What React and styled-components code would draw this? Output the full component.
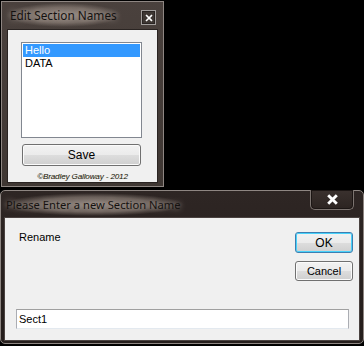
import React from "react";
import styled, { createGlobalStyle } from "styled-components";

const Global = createGlobalStyle`
  html, body { margin: 0; padding: 0; background: #000; }
  body { width: 364px; height: 346px; overflow: hidden; }
`;

const Page = styled.div`
  display: flex;
  flex-direction: column;
  align-items: flex-start;
  padding-top: 1px;
  gap: 3px;
`;

const Window = styled.div`
  display: flex;
  flex-direction: column;
  box-sizing: border-box;
  width: ${(p) => p.$w}px;
  height: ${(p) => p.$h}px;
  margin-left: ${(p) => p.$ml || 0}px;
  border: 1px solid #8e8682;
  border-radius: ${(p) => p.$radius || 0}px;
  background: ${(p) => p.$bg};
  padding: 0 ${(p) => p.$side}px ${(p) => p.$bottom}px ${(p) => p.$side}px;
`;

const TitleBar = styled.div`
  position: relative;
  display: flex;
  align-items: center;
  height: ${(p) => p.$h}px;
  flex-shrink: 0;
`;

const TitleText = styled.span`
  font-family: "Noto Sans", "Open Sans", sans-serif;
  font-size: ${(p) => p.$fs}px;
  color: #151210;
  padding: 4px ${(p) => p.$pad}px;
  margin-left: ${(p) => p.$ml}px;
  margin-top: ${(p) => p.$mt || 0}px;
  border-radius: 14px;
  background: radial-gradient(closest-side, rgba(160,148,140,0.85) 0%, rgba(140,128,120,0.65) 65%, rgba(110,100,95,0) 100%);
  text-shadow: 0 0 6px rgba(200,190,182,0.8);
`;

const SmallClose = styled.div`
  position: absolute;
  right: 2px;
  top: 8px;
  width: 15px;
  height: 15px;
  box-sizing: border-box;
  border: 1px solid #a19d9b;
  background: #3e3733;
  box-shadow: inset 0 0 0 1px #2a2422;
  display: flex;
  align-items: center;
  justify-content: center;
`;

const BigClose = styled.div`
  position: absolute;
  right: 6px;
  top: -1px;
  width: 44px;
  height: 20px;
  box-sizing: border-box;
  border: 1px solid #7c7470;
  border-top: none;
  border-radius: 0 0 5px 5px;
  box-shadow: inset 0 0 0 1px #1c1614;
  background: linear-gradient(#3a312e, #2c2421);
  display: flex;
  align-items: center;
  justify-content: center;
`;

const Client = styled.div`
  flex: 1;
  display: flex;
  flex-direction: column;
  box-sizing: border-box;
  background: #f0f0f0;
  border: 1px solid ${(p) => p.$border};
  font-family: "Liberation Sans", Arial, sans-serif;
  font-size: 11px;
  color: #000;
`;

const ListBox = styled.div`
  box-sizing: border-box;
  width: 121px;
  height: 96px;
  margin: 12px 0 0 13px;
  border: 1px solid #828790;
  background: #fff;
  padding: 1px;
`;

const ListItem = styled.div`
  height: 13px;
  line-height: 13px;
  padding-left: 2px;
  background: ${(p) => (p.$selected ? "#3399ff" : "transparent")};
  color: ${(p) => (p.$selected ? "#fff" : "#000")};
`;

const Button = styled.div`
  box-sizing: border-box;
  width: ${(p) => p.$w}px;
  height: ${(p) => p.$h}px;
  border: 1px solid ${(p) => (p.$default ? "#3c7fb1" : "#707070")};
  border-radius: 3px;
  background: linear-gradient(#f2f2f2 0%, #ebebeb 50%, #dddddd 51%, #cfcfcf 100%);
  box-shadow: inset 0 0 0 1px ${(p) => (p.$default ? "#48d2fb" : "#fbfbfb")};
  display: flex;
  align-items: center;
  justify-content: center;
  font-size: ${(p) => p.$fs || 11}px;
  color: #000;
`;

const SaveButton = styled(Button)`
  margin: 6px 0 0 14px;
`;

const Copyright = styled.div`
  margin-top: 6px;
  text-align: center;
  font-style: italic;
  font-size: 8px;
  color: #1a1a1a;
  letter-spacing: -0.1px;
  text-shadow: 0.5px 0 0 rgba(160,140,0,0.35);
`;

const Row = styled.div`
  display: flex;
  justify-content: space-between;
  padding: 14px 6px 0 14px;
`;

const Label = styled.div`
  margin-top: -1px;
`;

const ButtonCol = styled.div`
  display: flex;
  flex-direction: column;
  gap: 8px;
`;

const TextBox = styled.div`
  box-sizing: border-box;
  margin: auto 10px 11px 11px;
  height: 20px;
  border: 1px solid #abadb3;
  border-top-color: #a0a0a0;
  border-bottom-color: #e3e9ef;
  background: #fff;
  padding-left: 2px;
  display: flex;
  align-items: center;
`;

const CloseX = ({ size, stroke }) => (
  <svg width={size} height={size} viewBox="0 0 10 10">
    <path d="M2 2 L8 8 M8 2 L2 8" stroke="#fff" strokeWidth={stroke} strokeLinecap="square" />
  </svg>
);

export default function App() {
  return (
    <>
      <Global />
      <Page>
        <Window $w={163} $h={186} $ml={1} $bg="linear-gradient(#4a413d, #3f3733)" $side={5} $bottom={3}>
          <TitleBar $h={27}>
            <TitleText $fs={11.8} $pad={4} $ml={-1} $mt={-1}>Edit Section Names</TitleText>
            <SmallClose>
              <CloseX size={8} stroke={2} />
            </SmallClose>
          </TitleBar>
          <Client $border="#2a2422">
            <ListBox>
              <ListItem $selected>Hello</ListItem>
              <ListItem>DATA</ListItem>
            </ListBox>
            <SaveButton $w={119} $h={22} $fs={12}>Save</SaveButton>
            <Copyright>©Bradley Galloway - 2012</Copyright>
          </Client>
        </Window>
        <Window $w={364} $h={154} $bg="linear-gradient(#2e2624, #241d1b)" $side={3} $bottom={2} $radius={5}>
          <TitleBar $h={26}>
            <TitleText $fs={11.2} $pad={3} $ml={-1} $mt={1}>Please Enter a new Section Name</TitleText>
            <BigClose>
              <CloseX size={11} stroke={2.6} />
            </BigClose>
          </TitleBar>
          <Client $border="#4a4240">
            <Row>
              <Label>Rename</Label>
              <ButtonCol>
                <Button $w={58} $h={21} $default $fs={12}>OK</Button>
                <Button $w={58} $h={20}>Cancel</Button>
              </ButtonCol>
            </Row>
            <TextBox>Sect1</TextBox>
          </Client>
        </Window>
      </Page>
    </>
  );
}
